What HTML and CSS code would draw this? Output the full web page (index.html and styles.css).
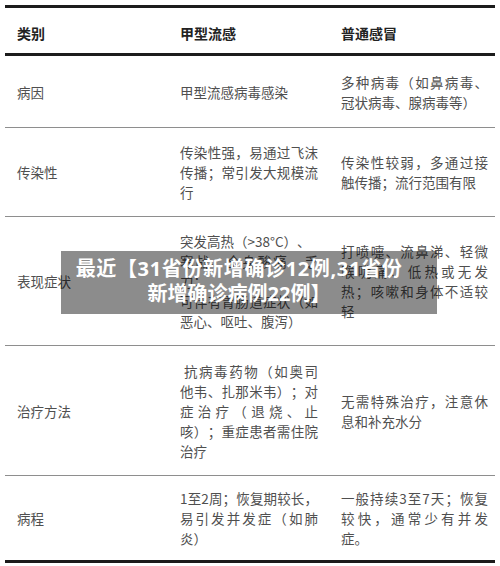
FILE: index.html
```html
<!DOCTYPE html>
<html lang="zh-CN">
<head>
<meta charset="utf-8">
<title>甲型流感与普通感冒</title>
<link rel="stylesheet" href="styles.css">
</head>
<body>
<div class="sheet">
  <div class="row head">
    <div class="cell">类别</div>
    <div class="cell">甲型流感</div>
    <div class="cell">普通感冒</div>
  </div>
  <div class="row row-cause">
    <div class="cell">病因</div>
    <div class="cell">甲型流感病毒感染</div>
    <div class="cell">多种病毒（如鼻病毒、冠状病毒、腺病毒等）</div>
  </div>
  <div class="row">
    <div class="cell">传染性</div>
    <div class="cell">传染性强，易通过飞沫传播；常引发大规模流行</div>
    <div class="cell">传染性较弱，多通过接触传播；流行范围有限</div>
  </div>
  <div class="row">
    <div class="cell">表现症状</div>
    <div class="cell">突发高热（&gt;38°C）、<br>寒战、全身酸痛、乏力；<br>可伴有胃肠道症状（如恶心、呕吐、腹泻）</div>
    <div class="cell">打喷嚏、流鼻涕、轻微喉咙痛、低热或无发热；咳嗽和身体不适较轻</div>
  </div>
  <div class="row row-treat">
    <div class="cell">治疗方法</div>
    <div class="cell indent">抗病毒药物（如奥司他韦、扎那米韦）；对症治疗（退烧、止咳）；重症患者需住院治疗</div>
    <div class="cell">无需特殊治疗，注意休息和补充水分</div>
  </div>
  <div class="row row-course">
    <div class="cell">病程</div>
    <div class="cell">1至2周；恢复期较长，易引发并发症（如肺炎）</div>
    <div class="cell">一般持续3至7天；恢复较快，通常少有并发症。</div>
  </div>
  <div class="banner"><span class="banner-lead">最近【31省份新增确诊12例,31省份</span><br>新增确诊病例22例】</div>
</div>
</body>
</html>
```

FILE: styles.css
```css
html, body {
  margin: 0;
  padding: 0;
  background: #ffffff;
}

body {
  font-family: "Noto Sans CJK SC", "Noto Sans", sans-serif;
  font-size: 13.5px;
  color: #4f4f4f;
  text-spacing-trim: space-all;
}

.sheet {
  position: relative;
  margin: 5px 5px 0;
  border-top: 3px solid #1c1c1c;
  border-bottom: 3px solid #1c1c1c;
}

.row {
  display: grid;
  grid-template-columns: 163px 161px 166px;
  align-items: center;
  padding: 14px 0;
  border-bottom: 1px solid #8e8e8e;
  line-height: 20px;
}

.row-cause {
  padding: 15.5px 0;
}

.row-treat {
  padding: 14.5px 0;
}

.row-course {
  padding: 12px 0;
  border-bottom: none;
}

.cell {
  padding-left: 12px;
  text-align: justify;
}

.cell:nth-child(2) {
  padding-right: 11px;
}

.cell:nth-child(3) {
  padding-right: 7px;
}

.head {
  padding: 15px 0 10px;
  border-bottom: 3px solid #1c1c1c;
  font-size: 14px;
  font-weight: 700;
  color: #222222;
}

.indent {
  text-indent: 4px;
}

.banner {
  position: absolute;
  left: 56px;
  top: 243px;
  width: 376px;
  height: 63px;
  box-sizing: border-box;
  padding: 5px 20px 0 0;
  background: rgba(0, 0, 0, 0.45);
  color: #ffffff;
  font-family: "Open Sans", "Noto Sans CJK SC", sans-serif;
  font-size: 20px;
  font-weight: 700;
  line-height: 25px;
  text-align: center;
  white-space: nowrap;
}

.banner-lead {
  letter-spacing: 0.65px;
}
```
